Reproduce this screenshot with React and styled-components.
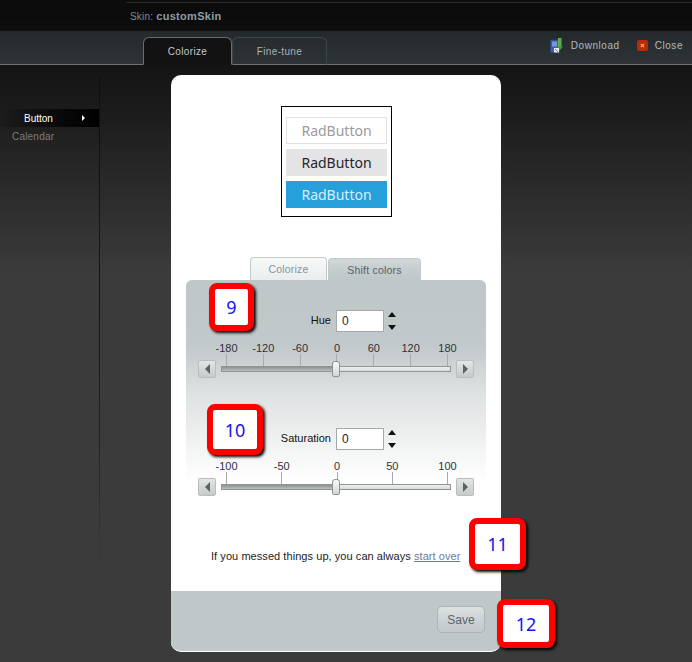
import React from "react";
import styled, { createGlobalStyle } from "styled-components";

const Global = createGlobalStyle`
  html, body { margin: 0; padding: 0; background: #3b3b3b; }
  * { box-sizing: border-box; }
  body { font-family: "Liberation Sans", Arial, sans-serif; }
`;

const Page = styled.div`
  position: relative;
  width: 692px;
  height: 662px;
  overflow: hidden;
  display: flex;
  flex-direction: column;
  background: #3b3b3b;
`;

const TopBar = styled.header`
  height: 31px;
  flex: none;
  padding: 2px 0 0 126px;
  background: linear-gradient(#0c0c0c, #0b0b0b 60%, #0f0f0f);
`;

const TopInner = styled.div`
  height: 100%;
  border-top: 1px solid #2a2a2a;
  padding: 7px 0 0 4px;
  font-size: 10px;
  line-height: 12px;
  letter-spacing: 0.2px;
  color: #7b8a92;
`;

const SkinName = styled.b`
  color: #8d9ca4;
  font-size: 11px;
  letter-spacing: 0.3px;
`;

const TabBar = styled.nav`
  height: 34px;
  flex: none;
  display: flex;
  align-items: flex-end;
  padding-left: 143px;
  background: linear-gradient(#24292c, #2d3336);
  border-bottom: 1px solid #6c7475;
`;

const DarkTab = styled.div`
  width: ${(p) => p.$w}px;
  height: 28px;
  margin-bottom: -1px;
  display: flex;
  align-items: center;
  justify-content: center;
  font-size: 10px;
  letter-spacing: 0.35px;
  border-radius: 6px 6px 0 0;
  color: ${(p) => (p.$active ? "#c4c9ca" : "#a9b0b2")};
  background: ${(p) => (p.$active ? "#121212" : "transparent")};
  border: 1px solid ${(p) => (p.$active ? "#676e70" : "#3e4548")};
  border-bottom: ${(p) => (p.$active ? "1px solid #121212" : "1px solid #6c7475")};
`;

const BarActions = styled.div`
  margin: 0 9px 8px auto;
  height: 22px;
  display: flex;
  align-items: center;
  font-size: 10px;
  letter-spacing: 0.55px;
  color: #b4babc;
`;

const ActionLabel = styled.span`
  margin: 0 17px 0 ${(p) => p.$gap}px;
  &:last-child { margin-right: 0; }
`;

const Main = styled.main`
  flex: 1;
  display: flex;
  align-items: flex-start;
  padding-top: 10px;
  background: linear-gradient(#141414, #1c1c1c 8%, #3b3b3b 35%);
`;

const Sidebar = styled.aside`
  width: 100px;
  height: 495px;
  flex: none;
  padding-top: 34px;
  border-right: 1px solid;
  border-image: linear-gradient(#0e0e0e, #1c1c1c 65%, #3b3b3b) 1;
  font-size: 10px;
`;

const SideActive = styled.div`
  height: 18px;
  display: flex;
  align-items: center;
  justify-content: space-between;
  padding: 0 14px 0 24px;
  color: #fff;
  background: linear-gradient(90deg, #1c1c1c, #0a0a0a 55%, #000);
`;

const SideArrow = styled.span`
  width: 0;
  height: 0;
  border-left: 3px solid #fff;
  border-top: 3px solid transparent;
  border-bottom: 3px solid transparent;
`;

const SideItem = styled.div`
  height: 18px;
  line-height: 20px;
  padding-left: 12px;
  letter-spacing: 0.2px;
  color: #7e7e7e;
`;

const Modal = styled.section`
  width: 330px;
  height: 577px;
  margin-left: 71px;
  display: flex;
  flex-direction: column;
  background: #fff;
  border-radius: 10px;
  overflow: hidden;
  border-bottom: 1px solid #fff;
`;

const Body = styled.div`
  flex: 1;
  padding-top: 31px;
`;

const Preview = styled.div`
  width: 111px;
  height: 111px;
  margin: 0 auto 40px;
  position: relative;
  left: 0.5px;
  padding: 10px 4px 0;
  display: flex;
  flex-direction: column;
  gap: 5px;
  border: 1px solid #000;
  background: #fff;
`;

const RadButton = styled.div`
  height: 27px;
  display: flex;
  align-items: center;
  justify-content: center;
  font-family: "Noto Sans", "Open Sans", sans-serif;
  font-size: 14px;
  ${(p) => p.$kind === "plain" && "background:#fff;border:1px solid #e1e1e1;color:#9b9b9b;"}
  ${(p) => p.$kind === "hover" && "background:#e4e4e6;color:#25252a;"}
  ${(p) => p.$kind === "active" && "background:#25a0da;color:#d8eef8;"}
`;

const PanelTabs = styled.div`
  height: 23px;
  padding-left: 79px;
  display: flex;
  gap: 1px;
  align-items: flex-end;
`;

const PanelTab = styled.div`
  width: ${(p) => p.$w}px;
  height: 23px;
  margin-bottom: ${(p) => (p.$active ? "-1px" : "0")};
  display: flex;
  align-items: center;
  justify-content: center;
  font-size: 10.5px;
  letter-spacing: 0.2px;
  border: 1px solid #c3cacb;
  border-bottom: 0;
  border-radius: 4px 4px 0 0;
  color: ${(p) => (p.$active ? "#56616a" : "#87929a")};
  background: ${(p) =>
    p.$active
      ? "linear-gradient(#d3d9da, #c6cdce 45%, #bfc6c7)"
      : "linear-gradient(#f8f9f9, #e9eded)"};
`;

const Panel = styled.div`
  margin: 0 15px;
  height: 220px;
  padding-top: 30px;
  border-radius: 6px 6px 0 0;
  background: linear-gradient(#bfc6c7 0, #c2c9ca 30%, #dfe2e2 52%, #fff 92%);
`;

const FieldRow = styled.div`
  display: flex;
  align-items: center;
  height: 22px;
`;

const FieldLabel = styled.label`
  width: 145px;
  margin: -2px 5px 0 0;
  text-align: right;
  font-size: 11px;
  color: #111;
`;

const NumberInput = styled.div`
  width: 48px;
  height: 22px;
  padding-left: 5px;
  line-height: 20px;
  font-size: 12px;
  color: #33202c;
  background: #fff;
  border: 1px solid #a4a8a9;
`;

const Spinner = styled.div`
  width: 8px;
  height: 18px;
  margin-left: 4px;
  display: flex;
  flex-direction: column;
  justify-content: space-between;
`;

const SpinArrow = styled.span`
  width: 0;
  height: 0;
  border-left: 4px solid transparent;
  border-right: 4px solid transparent;
  ${(p) => (p.$down ? "border-top: 5px solid #111;" : "border-bottom: 5px solid #111;")}
`;

const Scale = styled.div`
  width: 222px;
  margin: 10px 0 0 40px;
  height: 24px;
  display: flex;
  justify-content: space-between;
`;

const Tick = styled.div`
  width: 1px;
  height: 24px;
  display: flex;
  flex-direction: column;
  align-items: center;
`;

const TickLabel = styled.span`
  height: 12px;
  line-height: 12px;
  font-size: 11px;
  white-space: nowrap;
  color: #33303a;
`;

const TickLine = styled.span`
  width: 1px;
  height: 12px;
  flex: none;
  background: #a5abac;
`;

const SliderRow = styled.div`
  height: 18px;
  margin-top: -6px;
  padding-left: 12px;
  display: flex;
  align-items: center;
  gap: 5px;
`;

const StepButton = styled.div`
  width: 18px;
  height: 18px;
  display: flex;
  align-items: center;
  justify-content: center;
  border: 1px solid #b9bdbd;
  border-radius: 2px;
  background: linear-gradient(#e4e6e6, #c6caca);
`;

const StepArrow = styled.span`
  width: 0;
  height: 0;
  border-top: 5px solid transparent;
  border-bottom: 5px solid transparent;
  ${(p) => (p.$right ? "border-left: 5px solid #5c6264;" : "border-right: 5px solid #5c6264;")}
`;

const Track = styled.div`
  position: relative;
  width: 230px;
  height: 6px;
  border: 1px solid #8f9494;
  background: linear-gradient(#eeeeee, #d9dbdb);
`;

const TrackFill = styled.div`
  height: 100%;
  background: linear-gradient(#8d9191, #a6aaaa 55%, #bdbfbf);
`;

const Thumb = styled.div`
  position: absolute;
  left: 110px;
  top: -6px;
  width: 8px;
  height: 16px;
  border: 1px solid #8e9292;
  border-radius: 3px 3px 2px 2px;
  background: linear-gradient(#fafafa, #d4d6d6);
`;

const Message = styled.p`
  margin: 50px 0 0 40px;
  font-size: 11px;
  line-height: 12px;
  letter-spacing: 0.06px;
  white-space: nowrap;
  color: #1c1c1c;
`;

const StartOver = styled.a`
  color: #6a7b9c;
  text-decoration: underline;
`;

const Footer = styled.footer`
  height: 60px;
  flex: none;
  padding: 0 16px 3px 0;
  display: flex;
  align-items: center;
  justify-content: flex-end;
  background: #c0c7c8;
`;

const SaveButton = styled.button`
  width: 48px;
  height: 27px;
  padding: 0;
  font-family: inherit;
  font-size: 12px;
  color: #5a656c;
  border: 1px solid #abb3b4;
  border-radius: 5px;
  background: linear-gradient(#dde1e2, #cdd3d4 50%, #c3c9ca);
`;

const Callout = styled.div`
  position: absolute;
  left: ${(p) => p.$x}px;
  top: ${(p) => p.$y}px;
  width: ${(p) => p.$w}px;
  height: ${(p) => p.$h}px;
  display: flex;
  align-items: center;
  justify-content: center;
  font-family: "Noto Sans", "Open Sans", sans-serif;
  font-size: 18px;
  color: #1414f0;
  background: #fff;
  border: 6px solid #fe0000;
  border-radius: 8px;
  box-shadow: 2px 2px 3px #000;
`;

const DownloadIcon = () => (
  <svg width="14" height="15" viewBox="0 0 14 15">
    <rect x="0.5" y="2" width="9" height="12.5" fill="#3f5fa8" stroke="#26407c" strokeWidth="0.8" />
    <rect x="2" y="3.5" width="5" height="5" fill="#7d97cf" />
    <rect x="8" y="0" width="3.5" height="9" fill="#58b04a" />
    <path d="M6.5 8.5h6.5L9.8 12.5z" fill="#3f9a35" />
    <rect x="4" y="10" width="5" height="4.5" fill="#e4e8ee" />
    <path d="M5 11l3 3" stroke="#5a6a80" strokeWidth="0.8" />
  </svg>
);

const CloseIcon = () => (
  <svg width="11" height="11" viewBox="0 0 11 11">
    <rect x="0" y="0" width="11" height="11" rx="2" fill="#b8290f" />
    <path d="M3.8 3.8l3.4 3.4M7.2 3.8l-3.4 3.4" stroke="#f5b04a" strokeWidth="1.2" />
  </svg>
);

const Slider = ({ ticks }) => (
  <>
    <Scale>
      {ticks.map((t) => (
        <Tick key={t}>
          <TickLabel>{t}</TickLabel>
          <TickLine />
        </Tick>
      ))}
    </Scale>
    <SliderRow>
      <StepButton><StepArrow /></StepButton>
      <Track>
        <TrackFill style={{ width: "50%" }} />
        <Thumb />
      </Track>
      <StepButton><StepArrow $right /></StepButton>
    </SliderRow>
  </>
);

const Field = ({ label }) => (
  <FieldRow>
    <FieldLabel>{label}</FieldLabel>
    <NumberInput>0</NumberInput>
    <Spinner>
      <SpinArrow />
      <SpinArrow $down />
    </Spinner>
  </FieldRow>
);

const SecondBlock = styled.div`
  margin-top: 50px;
`;

export default function App() {
  return (
    <Page>
      <Global />
      <TopBar>
        <TopInner>
          Skin: <SkinName>customSkin</SkinName>
        </TopInner>
      </TopBar>
      <TabBar>
        <DarkTab $w={89} $active>Colorize</DarkTab>
        <DarkTab $w={95}>Fine-tune</DarkTab>
        <BarActions>
          <DownloadIcon />
          <ActionLabel $gap={7}>Download</ActionLabel>
          <CloseIcon />
          <ActionLabel $gap={7}>Close</ActionLabel>
        </BarActions>
      </TabBar>
      <Main>
        <Sidebar>
          <SideActive>
            Button
            <SideArrow />
          </SideActive>
          <SideItem>Calendar</SideItem>
        </Sidebar>
        <Modal>
          <Body>
            <Preview>
              <RadButton $kind="plain">RadButton</RadButton>
              <RadButton $kind="hover">RadButton</RadButton>
              <RadButton $kind="active">RadButton</RadButton>
            </Preview>
            <PanelTabs>
              <PanelTab $w={77}>Colorize</PanelTab>
              <PanelTab $w={93} $active>Shift colors</PanelTab>
            </PanelTabs>
            <Panel>
              <Field label="Hue" />
              <Slider ticks={["-180", "-120", "-60", "0", "60", "120", "180"]} />
              <SecondBlock>
                <Field label="Saturation" />
                <Slider ticks={["-100", "-50", "0", "50", "100"]} />
              </SecondBlock>
            </Panel>
            <Message>
              If you messed things up, you can always <StartOver>start over</StartOver>
            </Message>
          </Body>
          <Footer>
            <SaveButton>Save</SaveButton>
          </Footer>
        </Modal>
      </Main>
      <Callout $x={209} $y={283} $w={45} $h={48}>9</Callout>
      <Callout $x={207} $y={404} $w={56} $h={51}>10</Callout>
      <Callout $x={469} $y={518} $w={57} $h={52}>11</Callout>
      <Callout $x={497} $y={599} $w={58} $h={49}>12</Callout>
    </Page>
  );
}
